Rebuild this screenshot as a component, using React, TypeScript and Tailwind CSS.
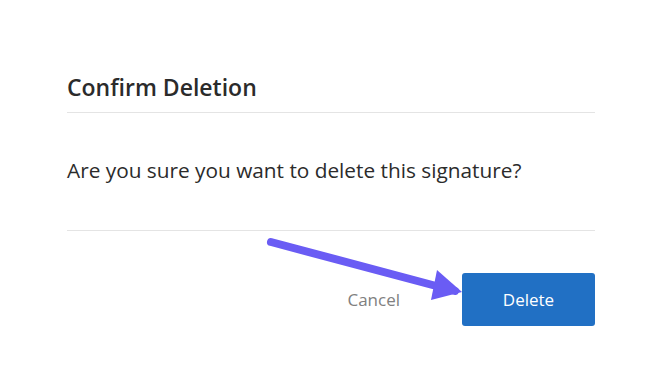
import React from 'react';

const App: React.FC = () => {
  return (
    <div className="relative w-[666px] h-[390px] bg-white font-['Open_Sans',sans-serif]">
      <div className="pl-[67px] pr-[71px] pt-[70px]">
        <h2 className="text-[23px] leading-[34px] font-semibold text-[#2b2b2b] pb-[8px] border-b border-[#e4e4e4]">
          Confirm Deletion
        </h2>
        <p className="pt-[43px] pb-[46px] text-[20.8px] leading-[28px] text-[#2b2b2b] border-b border-[#e4e4e4]">
          Are you sure you want to delete this signature?
        </p>
        <div className="flex items-center justify-end gap-[62px] pt-[42px]">
          <button className="text-[17px] text-[#808080]">Cancel</button>
          <button className="w-[133px] h-[53px] rounded-[3px] bg-[#2170c4] text-[17px] text-white">
            Delete
          </button>
        </div>
      </div>

      {/* annotation arrow */}
      <svg className="absolute left-0 top-0 pointer-events-none" width="666" height="390">
        <g stroke="#6a5cf4" strokeWidth="8" strokeLinecap="round" fill="none">
          <line x1="271" y1="242" x2="455" y2="291" />
        </g>
        <polygon points="462,292 437,270 431,300" fill="#6a5cf4" />
      </svg>
    </div>
  );
};

export default App;
